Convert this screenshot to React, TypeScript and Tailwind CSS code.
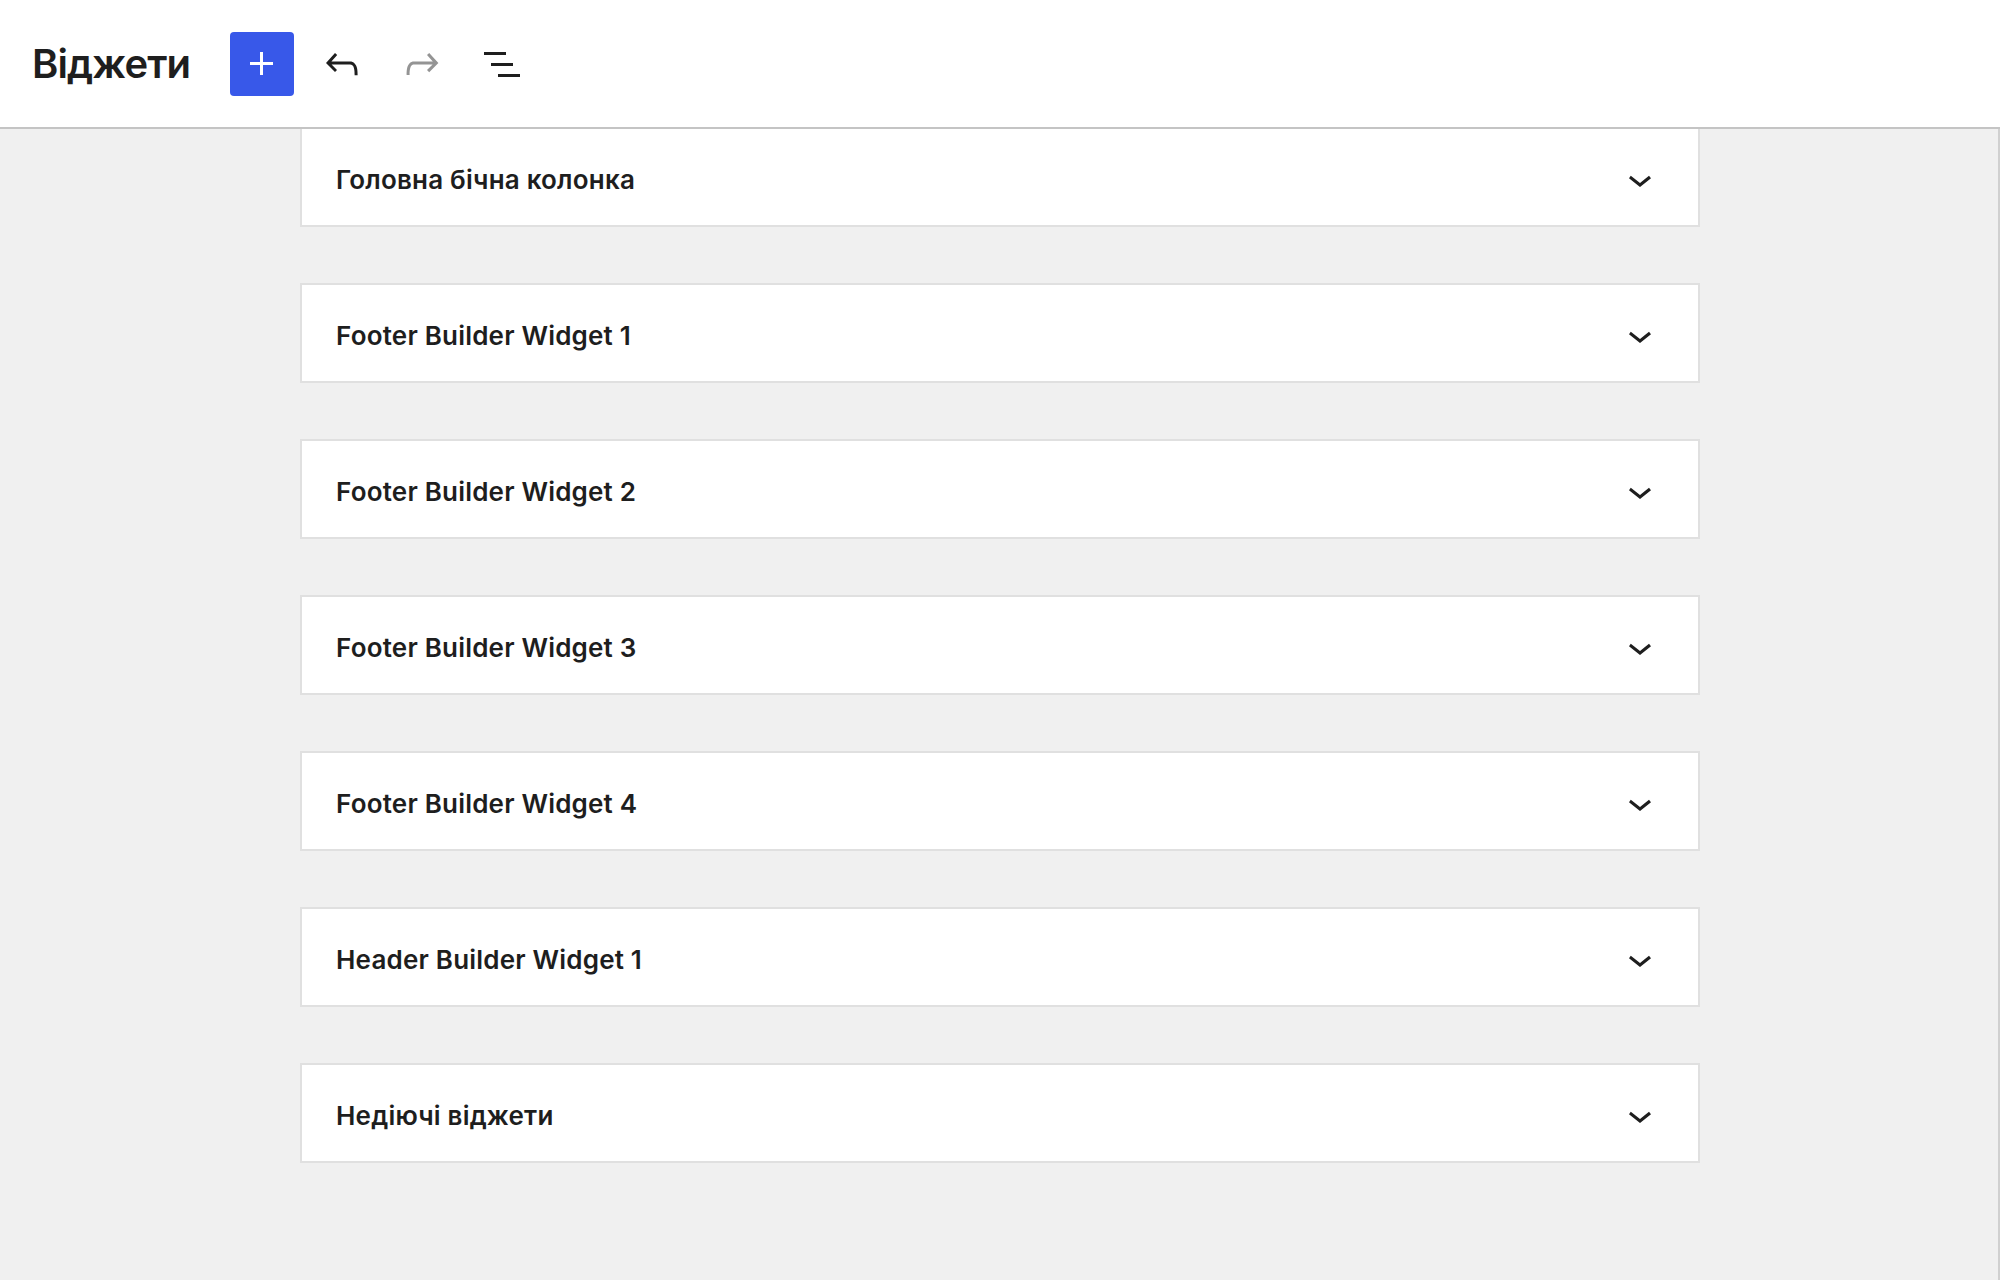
import { ReactNode } from "react";

const areas = [
  "Головна бічна колонка",
  "Footer Builder Widget 1",
  "Footer Builder Widget 2",
  "Footer Builder Widget 3",
  "Footer Builder Widget 4",
  "Header Builder Widget 1",
  "Недіючі віджети",
];

function Icon({ d, className }: { d: string; className?: string }) {
  return (
    <svg viewBox="0 0 24 24" className={className} fill="currentColor" aria-hidden>
      <path d={d} />
    </svg>
  );
}

const icons = {
  plus: "M11 12.5V17.5H12.5V12.5H17.5V11H12.5V6H11V11H6V12.5H11Z",
  undo: "M18.3 11.7c-.6-.6-1.4-.9-2.3-.9H6.7l2.9-3.3-1.1-1-4.5 5L8.5 16l1-1-2.7-2.7H16c.5 0 .9.2 1.3.5 1 1 1 3.4 1 4.5v.3h1.5v-.2c0-1.5 0-4.3-1.5-5.7z",
  redo: "M15.6 6.5l-1.1 1 2.9 3.3H8c-.9 0-1.7.3-2.3.9-1.4 1.5-1.4 4.2-1.4 5.6v.2h1.5v-.3c0-1.1 0-3.5 1-4.5.3-.3.7-.5 1.3-.5h9.2L14.5 15l1.1 1.1 4.6-4.6-4.6-5z",
  listView: "M3 6h11v1.5H3V6Zm3.5 5.5h11V13h-11v-1.5ZM21 17H10v1.5h11V17Z",
  chevronDown: "M17.5 11.6L12 16l-5.5-4.4.9-1.2L12 14l4.5-3.6 1 1.2z",
};

function ToolbarButton({ children, className }: { children: ReactNode; className?: string }) {
  return (
    <button className={`w-16 h-16 flex items-center justify-center rounded-[4px] ${className ?? ""}`}>
      {children}
    </button>
  );
}

function WidgetArea({ title }: { title: string }) {
  return (
    <div className="h-[100px] first:h-[98px] first:border-t-0 bg-white border-2 border-[#e0e0e0] flex items-center justify-between pl-[34px] pr-[34px]">
      <span className="pt-[5px] text-[26px] font-semibold text-[#1e1e1e] tracking-[0.2px]">{title}</span>
      <Icon d={icons.chevronDown} className="mt-[3px] w-12 h-12 text-[#1e1e1e]" />
    </div>
  );
}

export default function App() {
  return (
    <div
      className="min-h-screen flex flex-col bg-[#f0f0f0]"
      style={{ fontFamily: "Inter, 'Noto Sans', 'Liberation Sans', sans-serif" }}
    >
      {/* Top bar */}
      <header className="h-[129px] shrink-0 bg-white border-b-2 border-[#c4c4c4] flex items-center pl-8">
        <h1 className="text-[40px] font-semibold text-[#1e1e1e] w-[198px] tracking-[-0.9px]">Віджети</h1>
        <div className="flex items-center gap-4">
          <ToolbarButton className="bg-[#3858e9] text-white">
            <Icon d={icons.plus} className="w-12 h-12" />
          </ToolbarButton>
          <ToolbarButton className="text-[#1e1e1e]">
            <Icon d={icons.undo} className="w-12 h-12" />
          </ToolbarButton>
          <ToolbarButton className="text-[#949494]">
            <Icon d={icons.redo} className="w-12 h-12" />
          </ToolbarButton>
          <ToolbarButton className="text-[#1e1e1e]">
            <Icon d={icons.listView} className="w-12 h-12" />
          </ToolbarButton>
        </div>
      </header>

      {/* Widget areas */}
      <main className="flex-1 pl-[2px] border-r-2 border-[#d0d0d0]">
        <div className="w-[1400px] mx-auto flex flex-col gap-[56px] pb-16">
          {areas.map((a) => (
            <WidgetArea key={a} title={a} />
          ))}
        </div>
      </main>
    </div>
  );
}
